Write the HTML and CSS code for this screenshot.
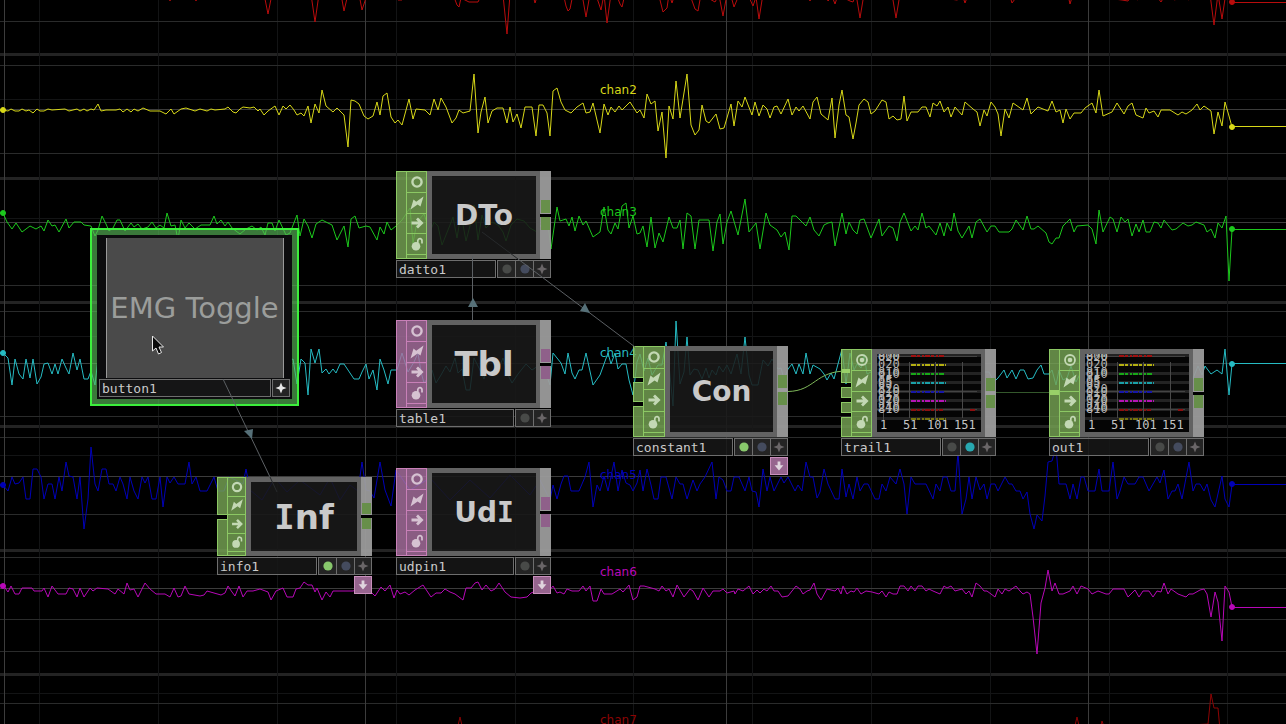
FILE: index.html
```html
<!DOCTYPE html>
<html lang="en">
<head>
<meta charset="utf-8">
<title>EMG network</title>
<link rel="stylesheet" href="styles.css">
</head>
<body>
<svg class="symbols" aria-hidden="true">
  <symbol id="ring" viewBox="-10 -10 20 20"><circle r="4.6" fill="none" stroke="currentColor" stroke-width="2.4"/></symbol>
  <symbol id="target" viewBox="-10 -10 20 20"><circle r="5" fill="none" stroke="currentColor" stroke-width="1.8"/><circle r="2.3" fill="currentColor"/></symbol>
  <symbol id="bolt" viewBox="-10 -10 20 20"><path d="M-6.5 6.500L-3.500-3.500L-.8-1.200L6.500-6.500L3.500 3.500L.6 1.400Z" fill="currentColor"/></symbol>
  <symbol id="arrow" viewBox="-10 -10 20 20"><path d="M-5.5 0H4M0-4.6L4.6 0L0 4.6" fill="none" stroke="currentColor" stroke-width="2.8"/></symbol>
  <symbol id="lock" viewBox="-10 -10 20 20"><circle cx="-1" cy="2.2" r="4.3" fill="currentColor"/><path d="M.8-1V-3.5Q1.2-5.6 3.2-5.4Q5.2-5 5-2.6V-.6" fill="none" stroke="currentColor" stroke-width="1.7"/></symbol>
  <symbol id="star" viewBox="-8 -8 16 16"><path d="M0-5.5L1.6-1.6L5.5 0L1.6 1.6L0 5.5L-1.6 1.6L-5.5 0L-1.6-1.6Z" fill="currentColor"/></symbol>
  <symbol id="dot" viewBox="-8 -8 16 16"><circle r="4.6" fill="currentColor"/></symbol>
  <symbol id="down" viewBox="-8 -8 16 16"><path d="M-1.4-4.5H1.4V-.8H4.4L0 4.4L-4.4-.8H-1.4Z" fill="currentColor"/></symbol>
  <symbol id="plot" viewBox="0 0 104 78">
    <path d="M0 1.5H104M0 10.500H104M0 19.500H104M0 28.500H104M0 37.500H104M0 46.500H104M0 55.500H104M0 64.500H104" stroke="#232323" stroke-width="3"/>
    <path d="M0 2.500H100M0 37.500H100M0 55.500H100" stroke="#444"/>
    <path d="M6.500 8V66M32.500 8V64M58.500 8V66M85.500 8V64" stroke="#484848"/>
    <g fill="none" stroke-width="2" stroke-dasharray="5 1 3 2 2 1">
      <path d="M34 2H68" stroke="#a01010"/><path d="M34 11H69" stroke="#b4b012"/><path d="M34 20H68" stroke="#18a818"/><path d="M34 29H69" stroke="#1aa0a8"/><path d="M34 38H68" stroke="#1818a8"/><path d="M34 47H69" stroke="#b414b4"/><path d="M34 56H66M93 56H98" stroke="#8c1010"/><path d="M34 65H69" stroke="#77750e"/>
    </g>
    <g fill="#b4b4b4">
      <text x="1" y="6">800</text><text x="1" y="7">020</text><text x="1" y="14">020</text><text x="1" y="22">810</text><text x="1" y="24">010</text><text x="1" y="31">05</text><text x="1" y="33">85</text><text x="1" y="39">820</text><text x="1" y="42">010</text><text x="1" y="49">020</text><text x="1" y="51">370</text><text x="1" y="57">240</text><text x="1" y="59">810</text>
    </g>
    <g fill="#c4c4c4"><text x="3" y="75">1</text><text x="26" y="75">51</text><text x="50" y="75">101</text><text x="77" y="75">151</text></g>
  </symbol>
</svg>

<main class="canvas">
  <svg class="layer" role="img" aria-label="EMG channels">
    <g class="grid-band">
      <line x1="0" x2="100%" y1="54.5" y2="54.500"/><line x1="0" x2="100%" y1="178.5" y2="178.500"/><line x1="0" x2="100%" y1="302.5" y2="302.500"/><line x1="0" x2="100%" y1="426.5" y2="426.500"/><line x1="0" x2="100%" y1="550.5" y2="550.500"/><line x1="0" x2="100%" y1="674.5" y2="674.500"/>
    </g>
    <g class="grid-faint">
      <path d="M39.500 0V2000M158.500 0V2000M277.500 0V2000M396.500 0V2000M515.500 0V2000M633.500 0V2000M752.500 0V2000M871.500 0V2000M990.500 0V2000M1227.500 0V2000"/>
      <path d="M0 99.500H4000M0 218.500H4000M0 336.500H4000M0 455.500H4000M0 574.500H4000M0 693.500H4000M1109.500 0V2000"/>
    </g>
    <path class="grid-line" d="M0 21.500H4000M0 65.500H4000M0 153.500H4000M0 285.500H4000M0 311.500H4000M0 416.500H4000M0 437.500H4000M0 514.500H4000M0 557.500H4000M0 619.500H4000M0 651.500H4000M0 703.500H4000"/>
    <path class="grid-main" d="M4.500 0V2000M365.500 0V2000M726.500 0V2000M1088.500 0V2000M0 109.500H4000M0 222.500H4000M0 363.500H4000M0 476.500H4000M0 588.500H4000"/>

    <g class="wave red">
      <polyline points="0,-6 168,-6 170,1 172,-6 194,-6 196,1 198,-6 264,-6 268,14 272,-6 311,-6 315,22 319,-6 341,-6 344,11 348,-6 359,-6 362,10 366,-2 369,-6 396,-3 398,0 402,0 405,-6 454,-3 457,5 459,7 461,-2 469,2 478,2 482,-6 503,-5 507,34 510,-6 533,-5 535,3 538,-6 564,-3 566,6 568,11 570,9 573,-6 582,-6 586,17 590,-6 596,-5 601,10 604,-6 607,23 611,-6 617,-4 620,4 622,7 625,-6 659,-4 663,12 667,8 669,-6 672,3 675,-6 690,-5 695,9 698,11 701,-6 715,2 719,-5 723,16 727,-6 731,-4 734,7 739,-5 749,-3 753,6 756,-3 759,19 763,-6 807,-5 810,1 813,-5 826,-5 828,1 832,-4 835,4 838,-5 850,1 853,2 856,-6 860,18 864,-6 892,-6 896,18 900,-6 907,-5 910,0 914,-6 957,0 963,-3 965,3 968,-5 982,-3 985,0 988,-6 1010,-4 1012,3 1015,-1 1018,-6 1068,-5 1070,4 1073,-6 1122,0 1128,1 1131,-4 1138,0 1143,-5 1158,-2 1161,2 1165,-5 1175,0 1181,-5 1189,0 1194,-6 1210,-6 1214,25 1218,-6 1222,19 1226,-8 1232,2"/>
      <line x1="1232" x2="100%" y1="2.500" y2="2.500"/><circle cx="1232" cy="2" r="2.500"/>
    </g>
    <g class="wave yellow">
      <polyline points="0,110 3,110 8,111 11,109 15,111 19,111 22,109 26,111 29,110 33,113 37,109 40,111 44,111 48,109 52,110 65,109 69,111 73,110 77,109 80,111 84,109 87,111 91,109 94,110 98,104 101,111 106,110 116,110 120,109 123,112 127,109 131,112 134,109 138,111 143,108 150,111 160,111 166,114 171,109 174,114 181,109 186,108 195,111 200,109 207,111 211,109 215,110 225,109 228,107 233,112 236,113 240,109 243,107 250,108 254,107 258,111 260,109 264,115 268,111 275,106 279,115 283,106 286,109 290,105 294,110 297,115 301,113 304,116 308,106 311,123 315,104 319,113 322,90 326,106 333,112 337,108 344,115 348,147 351,100 355,101 359,104 364,116 368,119 373,116 377,102 380,115 383,96 387,93 391,117 395,123 398,120 402,125 409,99 413,119 416,109 425,110 430,115 434,99 438,110 441,98 446,107 452,123 456,118 459,110 463,113 470,111 474,74 478,133 481,112 485,97 488,123 492,111 497,108 503,108 507,123 510,107 513,122 517,114 521,128 525,107 532,107 536,136 539,105 543,105 547,113 550,136 553,91 557,88 561,102 565,110 571,113 577,107 583,103 586,113 590,112 593,103 600,133 604,104 608,115 611,107 615,112 619,106 622,110 630,102 637,113 640,110 644,118 647,94 651,104 655,101 658,131 662,112 666,158 669,106 673,119 676,81 680,118 687,74 691,125 695,135 699,130 702,105 706,121 709,123 716,114 720,129 724,128 731,104 734,126 738,101 742,107 745,97 752,115 755,102 759,116 763,105 767,109 770,118 774,107 777,106 781,114 788,99 792,115 796,107 799,111 803,106 810,119 813,102 817,97 821,114 828,120 832,98 835,138 839,105 842,90 846,115 849,117 853,139 856,123 859,105 864,99 868,102 871,114 875,111 882,100 886,102 889,119 893,116 897,120 901,119 904,96 907,121 911,112 918,112 922,107 926,107 930,117 933,103 937,106 940,101 944,112 948,107 951,117 955,107 962,115 965,102 973,109 977,112 980,126 984,110 987,116 991,102 995,107 998,114 1001,136 1005,109 1009,118 1013,103 1023,110 1027,98 1031,114 1038,107 1048,111 1052,101 1056,112 1060,110 1063,123 1066,109 1070,119 1074,113 1081,113 1085,108 1092,103 1096,113 1099,90 1103,116 1112,112 1117,103 1124,114 1128,106 1132,103 1136,115 1143,118 1146,108 1149,113 1154,111 1158,117 1161,110 1170,110 1178,115 1182,112 1186,114 1192,110 1197,104 1200,110 1204,106 1211,111 1214,134 1218,112 1222,126 1225,102 1229,116 1232,127"/>
      <line x1="1232" x2="100%" y1="126.500" y2="126.500"/><circle cx="3" cy="110" r="2.500"/><circle cx="1232" cy="127" r="2.500"/>
    </g>
    <g class="wave green">
      <polyline points="0,213 3,213 7,222 12,229 16,223 22,232 30,226 36,229 41,226 44,231 48,220 52,226 55,225 59,232 66,219 69,228 74,222 81,222 84,225 91,226 95,236 98,230 102,216 106,224 109,231 113,228 117,220 120,220 125,231 131,223 134,227 138,224 142,229 148,227 152,222 156,228 160,225 164,228 167,213 171,226 175,225 178,240 181,220 185,228 189,223 195,229 201,225 210,225 214,216 217,224 221,220 225,226 228,222 232,228 240,234 246,229 252,226 257,230 261,227 265,235 268,223 272,223 275,231 279,220 286,235 290,233 297,215 300,236 304,219 308,226 312,238 316,224 322,220 332,225 337,240 344,226 348,247 351,219 355,216 359,228 366,226 370,227 377,240 380,227 384,234 387,222 391,230 396,226 402,220 410,208 413,243 417,222 424,214 430,232 434,222 438,226 442,245 450,225 453,217 457,238 461,214 466,241 471,222 474,205 478,240 482,215 486,228 492,222 498,225 503,232 506,241 511,225 517,219 524,221 530,228 537,232 541,225 545,228 547,216 551,249 557,207 560,221 566,219 569,226 572,217 575,231 579,216 583,225 586,221 593,237 600,232 604,207 608,230 611,234 615,223 618,229 622,206 626,203 629,228 633,216 637,234 640,233 643,226 647,247 651,217 655,248 659,233 663,242 669,217 673,228 677,228 680,220 683,249 687,213 691,216 695,249 699,220 709,220 713,251 717,222 720,214 723,244 727,222 731,211 738,235 745,199 749,232 756,223 760,249 766,213 770,225 777,230 781,237 785,232 789,250 792,216 796,216 806,226 810,217 814,230 819,236 824,225 828,223 832,222 835,246 842,213 846,234 849,222 853,230 857,234 860,220 864,219 871,238 879,219 882,236 889,226 893,228 897,241 900,222 904,213 911,231 915,226 918,230 922,213 926,228 929,226 936,235 940,223 944,236 947,223 951,231 954,213 958,231 962,238 969,226 972,238 976,222 980,219 987,232 991,226 995,226 999,232 1009,232 1012,229 1016,220 1023,230 1027,216 1031,229 1034,229 1038,226 1046,233 1049,242 1052,244 1056,238 1059,238 1063,226 1070,219 1074,232 1077,226 1088,225 1092,229 1096,244 1099,210 1103,232 1110,217 1113,219 1117,232 1121,217 1125,222 1128,219 1132,236 1136,224 1139,232 1143,220 1146,232 1150,232 1154,222 1158,223 1161,228 1164,220 1172,230 1176,229 1183,223 1188,226 1192,225 1196,222 1204,225 1207,232 1211,229 1215,238 1218,223 1222,228 1226,216 1229,281 1232,230"/>
      <line x1="1232" x2="100%" y1="229.500" y2="229.500"/><circle cx="3" cy="213" r="2.500"/><circle cx="1232" cy="229" r="2.500"/>
    </g>
    <g class="wave cyan">
      <polyline points="0,353 3,353 8,358 12,385 15,359 19,374 23,379 26,359 30,378 33,359 37,384 41,377 44,364 48,363 52,374 55,364 58,374 62,359 66,368 69,374 73,353 77,370 80,359 84,379 88,379 91,371 95,385 98,358 105,360 120,379 125,370 133,378 137,385 140,374 164,379 173,370 184,376 188,386 191,374 243,379 255,370 271,379 280,365 293,359 297,384 301,359 305,363 308,395 311,349 315,363 319,349 322,373 326,369 329,374 333,369 336,373 340,364 344,364 354,379 359,379 362,372 366,364 369,379 373,370 377,390 380,359 384,370 388,384 391,370 397,370 402,353 408,372 414,362 418,353 421,372 424,383 428,378 432,370 436,383 441,375 446,366 450,372 455,358 458,373 462,369 466,390 470,390 474,358 479,368 484,379 488,362 494,358 498,370 503,358 508,375 512,383 518,374 526,364 532,370 541,364 546,374 550,385 553,353 561,363 565,374 568,353 572,373 575,379 579,370 582,370 586,353 593,385 600,375 604,364 608,353 611,364 615,353 618,369 622,364 626,364 629,380 633,395 637,362 640,354 644,371 648,358 652,375 658,365 662,365 666,342 669,365 673,406 676,321 680,384 684,372 687,337 690,375 694,369 698,370 702,379 706,368 709,378 712,370 716,375 719,366 723,372 727,365 731,374 737,354 741,374 745,337 749,375 752,385 758,385 763,360 768,366 772,359 778,369 781,368 784,379 788,369 792,364 796,374 799,364 803,374 806,353 810,374 813,365 820,369 824,374 827,380 831,373 834,379 838,364 842,349 846,384 850,353 854,370 857,364 861,368 864,354 867,374 875,370 880,365 975,365 981,368 985,372 989,372 994,382 998,378 1004,370 1007,378 1012,370 1016,379 1020,370 1024,370 1028,379 1033,378 1037,370 1041,365 1044,374 1049,374 1052,370 1056,385 1059,370 1063,380 1067,378 1071,366 1076,382 1080,374 1189,357 1192,381 1198,366 1202,375 1205,366 1211,374 1217,370 1222,374 1225,349 1229,395 1232,364"/>
      <line x1="1232" x2="100%" y1="363.500" y2="363.500"/><circle cx="3" cy="353" r="2.500"/><circle cx="1232" cy="364" r="2.500"/>
    </g>
    <g class="wave blue">
      <polyline points="0,485 3,485 8,491 12,477 15,484 19,483 23,477 26,499 30,499 33,469 37,469 41,477 44,499 48,484 52,484 55,499 59,477 62,491 66,462 69,476 73,477 77,499 80,477 84,529 88,499 91,447 95,484 98,491 102,469 106,469 109,484 113,484 116,491 120,477 123,484 127,499 130,477 134,491 138,499 142,477 145,483 148,477 152,499 156,499 160,477 163,507 167,477 170,483 174,477 178,484 185,484 189,462 192,484 196,477 200,491 207,491 214,477 218,491 224,491 229,477 240,482 243,484 246,469 250,490 262,500 275,478 287,492 300,480 320,495 330,478 340,500 350,485 358,491 362,462 366,490 370,491 374,498 380,462 385,490 391,506 396,470 410,490 430,478 450,500 470,480 490,498 510,475 530,495 540,480 550,500 553,485 557,499 561,484 564,476 568,476 571,491 579,491 585,477 589,462 593,507 597,485 600,491 604,476 608,491 614,462 618,491 622,470 626,483 630,485 633,491 637,483 640,470 643,491 647,469 651,485 654,499 658,499 661,477 666,477 672,499 676,477 680,484 683,484 687,499 693,480 697,491 700,484 705,477 712,462 716,499 719,477 723,480 727,491 731,491 734,477 739,477 745,491 749,477 752,491 756,492 759,507 763,469 767,491 770,477 774,491 781,477 784,483 788,477 795,491 798,485 802,491 806,462 810,477 813,477 817,498 820,492 824,469 828,484 835,499 839,499 842,469 846,497 849,484 853,499 857,477 860,491 864,484 868,484 875,499 879,499 882,484 886,491 890,477 896,484 900,469 904,484 907,514 911,477 915,484 926,484 933,499 936,484 940,491 943,477 947,477 951,491 955,491 958,452 962,514 966,499 969,477 972,499 976,477 980,490 984,484 987,499 991,484 995,484 998,491 1005,477 1009,484 1012,484 1016,491 1020,491 1023,499 1027,492 1030,514 1034,529 1037,515 1042,521 1045,496 1048,462 1052,461 1056,447 1059,484 1066,484 1070,499 1073,484 1077,499 1081,477 1084,477 1088,491 1095,491 1099,469 1102,491 1109,491 1113,462 1117,499 1120,491 1124,477 1128,484 1135,484 1139,477 1143,477 1149,491 1157,477 1160,483 1164,470 1168,499 1172,491 1175,491 1178,484 1182,499 1189,462 1193,491 1196,484 1200,484 1204,491 1207,484 1211,500 1215,507 1222,476 1225,499 1229,507 1232,485"/>
      <line x1="1232" x2="100%" y1="484.500" y2="484.500"/><circle cx="3" cy="485" r="2.500"/><circle cx="1232" cy="484" r="2.500"/>
    </g>
    <g class="wave magenta">
      <polyline points="0,585 3,585 8,592 11,586 15,594 19,594 22,588 32,588 34,591 42,591 44,588 48,597 52,586 58,594 66,594 69,588 73,589 77,597 80,588 84,597 90,588 93,591 97,588 108,589 115,594 118,589 124,594 127,583 130,590 134,589 138,597 145,583 150,589 156,594 165,594 170,597 174,588 178,597 181,596 185,586 189,594 200,596 204,595 207,591 214,593 221,595 225,593 228,586 232,592 235,596 239,586 243,597 247,591 253,591 260,589 268,592 271,600 276,591 283,588 287,597 293,597 296,589 300,588 304,582 308,585 312,585 315,592 317,588 322,600 326,592 330,597 333,591 353,591 362,588 371,592 375,596 381,587 385,591 390,585 394,598 397,590 400,594 405,592 409,595 415,590 423,585 431,597 436,593 441,593 445,589 450,592 455,594 463,600 466,588 471,588 475,583 478,582 482,590 486,585 491,591 495,589 499,583 505,592 511,597 520,598 527,597 531,593 536,591 541,592 545,590 549,591 553,586 557,593 560,592 564,594 567,589 572,591 579,591 583,586 586,591 590,586 593,601 597,601 601,589 604,594 612,594 620,589 623,592 629,585 633,600 637,597 640,586 644,586 655,589 659,591 662,586 666,591 669,589 673,597 677,585 684,597 690,589 693,591 698,600 703,588 709,597 713,591 720,591 723,589 727,593 734,591 735,594 738,589 743,591 749,586 753,594 757,590 760,593 764,589 767,591 771,586 774,591 778,591 782,597 788,596 796,586 800,589 803,594 807,591 810,590 814,583 817,594 821,600 827,589 835,591 838,588 841,594 843,586 847,594 851,591 854,592 857,588 861,594 866,591 872,592 879,594 882,591 886,597 889,592 893,594 897,594 900,586 904,586 908,591 911,586 915,591 918,586 922,586 926,591 929,589 933,591 940,594 944,586 947,588 951,586 955,591 962,589 966,594 969,591 972,597 976,583 980,586 984,591 987,591 995,597 998,589 1002,594 1005,589 1009,591 1016,586 1020,591 1023,594 1027,592 1030,594 1033,617 1037,654 1041,603 1045,588 1048,570 1052,591 1055,583 1059,594 1063,594 1070,591 1073,586 1077,594 1081,586 1088,589 1092,594 1098,591 1106,594 1109,594 1113,589 1124,589 1128,597 1135,590 1139,597 1143,591 1149,591 1153,597 1157,591 1161,592 1164,583 1168,594 1171,589 1178,594 1186,597 1189,594 1193,594 1200,590 1204,589 1207,594 1211,617 1215,592 1218,602 1222,641 1225,586 1229,592 1232,607"/>
      <line x1="1232" x2="100%" y1="607.500" y2="607.500"/><circle cx="3" cy="586" r="2.500"/><circle cx="1232" cy="607" r="2.500"/>
    </g>
    <g class="wave maroon">
      <polyline points="0,730 457,730 460,717 463,730 1074,730 1077,717 1080,730 1100,730 1102,721 1105,730 1208,724 1211,694 1214,708 1218,708 1220,730"/>
    </g>
    <g class="labels">
      <text class="yellow" x="600" y="94">chan2</text>
      <text class="green" x="600" y="216">chan3</text>
      <text class="cyan" x="600" y="357">chan4</text>
      <text class="blue" x="600" y="479">chan5</text>
      <text class="magenta" x="600" y="576">chan6</text>
      <text class="maroon" x="600" y="724">chan7</text>
    </g>
  </svg>

  <section class="selection at-button">
    <div class="panel">
      <button class="toggle" type="button">EMG Toggle</button>
      <div class="bar"><span class="name">button1</span><div class="flags"><button class="lit" type="button" aria-label="Viewer active"><svg><use href="#star"/></svg></button></div></div>
    </div>
  </section>

  <section class="node chop at-datto">
    <div class="body">
      <div class="inputs"><i></i></div>
      <div class="tools"><button type="button" aria-label="Viewer"><svg><use href="#ring"/></svg></button><button type="button" aria-label="Clone"><svg><use href="#bolt"/></svg></button><button type="button" aria-label="Bypass"><svg><use href="#arrow"/></svg></button><button type="button" aria-label="Lock"><svg><use href="#lock"/></svg></button></div>
      <div class="view"><span class="big">DTo</span></div>
      <div class="outputs"><i></i><b></b><i></i></div>
    </div>
    <div class="bar"><span class="name">datto1</span><div class="flags"><button type="button" aria-label="Display"><svg><use href="#dot"/></svg></button><button class="blueish" type="button" aria-label="Export"><svg><use href="#dot"/></svg></button><button class="spark" type="button" aria-label="Viewer active"><svg><use href="#star"/></svg></button></div></div>
  </section>

  <section class="node dat at-table">
    <div class="body">
      <div class="inputs"><i></i></div>
      <div class="tools"><button type="button" aria-label="Viewer"><svg><use href="#ring"/></svg></button><button type="button" aria-label="Clone"><svg><use href="#bolt"/></svg></button><button type="button" aria-label="Bypass"><svg><use href="#arrow"/></svg></button><button type="button" aria-label="Lock"><svg><use href="#lock"/></svg></button></div>
      <div class="view"><span class="huge">Tbl</span></div>
      <div class="outputs"><i></i><b></b><i></i></div>
    </div>
    <div class="bar"><span class="name">table1</span><div class="flags"><button type="button" aria-label="Display"><svg><use href="#dot"/></svg></button><button class="spark" type="button" aria-label="Viewer active"><svg><use href="#star"/></svg></button></div></div>
  </section>

  <section class="node dat at-udpin">
    <div class="body">
      <div class="inputs"><i></i></div>
      <div class="tools"><button type="button" aria-label="Viewer"><svg><use href="#ring"/></svg></button><button type="button" aria-label="Clone"><svg><use href="#bolt"/></svg></button><button type="button" aria-label="Bypass"><svg><use href="#arrow"/></svg></button><button type="button" aria-label="Lock"><svg><use href="#lock"/></svg></button></div>
      <div class="view"><span class="big">Ud<span class="slab">I</span></span></div>
      <div class="outputs"><i></i><b></b><i></i></div>
    </div>
    <div class="bar"><span class="name">udpin1</span><div class="flags"><button type="button" aria-label="Display"><svg><use href="#dot"/></svg></button><button class="spark" type="button" aria-label="Viewer active"><svg><use href="#star"/></svg></button></div></div>
    <button class="dock" type="button" aria-label="Open docked"><svg><use href="#down"/></svg></button>
  </section>

  <section class="node chop small at-info">
    <div class="body">
      <div class="inputs"><i></i><i></i></div>
      <div class="tools"><button type="button" aria-label="Viewer"><svg><use href="#ring"/></svg></button><button type="button" aria-label="Clone"><svg><use href="#bolt"/></svg></button><button type="button" aria-label="Bypass"><svg><use href="#arrow"/></svg></button><button type="button" aria-label="Lock"><svg><use href="#lock"/></svg></button></div>
      <div class="view"><span class="huge"><span class="slab">I</span>nf</span></div>
      <div class="outputs"><i></i><b></b><i></i></div>
    </div>
    <div class="bar"><span class="name">info1</span><div class="flags"><button class="on" type="button" aria-label="Display"><svg><use href="#dot"/></svg></button><button class="blueish" type="button" aria-label="Export"><svg><use href="#dot"/></svg></button><button class="spark" type="button" aria-label="Viewer active"><svg><use href="#star"/></svg></button></div></div>
    <button class="dock" type="button" aria-label="Open docked"><svg><use href="#down"/></svg></button>
  </section>

  <section class="node chop tall joined at-constant">
    <div class="body">
      <div class="inputs"><i></i><i></i><i></i></div>
      <div class="tools"><button type="button" aria-label="Viewer"><svg><use href="#ring"/></svg></button><button type="button" aria-label="Clone"><svg><use href="#bolt"/></svg></button><button type="button" aria-label="Bypass"><svg><use href="#arrow"/></svg></button><button type="button" aria-label="Lock"><svg><use href="#lock"/></svg></button></div>
      <div class="view"><span class="big">Con</span></div>
      <div class="outputs"><i></i><b></b><i></i></div>
    </div>
    <div class="bar"><span class="name">constant1</span><div class="flags"><button class="on" type="button" aria-label="Display"><svg><use href="#dot"/></svg></button><button class="blueish" type="button" aria-label="Export"><svg><use href="#dot"/></svg></button><button class="spark" type="button" aria-label="Viewer active"><svg><use href="#star"/></svg></button></div></div>
    <button class="dock" type="button" aria-label="Open docked"><svg><use href="#down"/></svg></button>
  </section>

  <section class="node chop joined multi at-trail">
    <div class="body">
      <div class="inputs"><i></i><i></i><i></i><i></i></div>
      <div class="tools"><button type="button" aria-label="Viewer"><svg><use href="#target"/></svg></button><button type="button" aria-label="Clone"><svg><use href="#bolt"/></svg></button><button type="button" aria-label="Bypass"><svg><use href="#arrow"/></svg></button><button type="button" aria-label="Lock"><svg><use href="#lock"/></svg></button></div>
      <div class="view"><svg class="plot"><use href="#plot"/></svg></div>
      <div class="outputs"><i></i><b></b><i></i></div>
    </div>
    <div class="bar"><span class="name">trail1</span><div class="flags"><button type="button" aria-label="Display"><svg><use href="#dot"/></svg></button><button class="aqua" type="button" aria-label="Export"><svg><use href="#dot"/></svg></button><button class="spark" type="button" aria-label="Viewer active"><svg><use href="#star"/></svg></button></div></div>
  </section>

  <section class="node chop at-out">
    <div class="body">
      <div class="inputs"><i></i></div>
      <div class="tools"><button type="button" aria-label="Viewer"><svg><use href="#target"/></svg></button><button type="button" aria-label="Clone"><svg><use href="#bolt"/></svg></button><button type="button" aria-label="Bypass"><svg><use href="#arrow"/></svg></button><button type="button" aria-label="Lock"><svg><use href="#lock"/></svg></button></div>
      <div class="view"><svg class="plot"><use href="#plot"/></svg></div>
      <div class="outputs"><i></i><b></b><i></i></div>
    </div>
    <div class="bar"><span class="name">out1</span><div class="flags"><button type="button" aria-label="Display"><svg><use href="#dot"/></svg></button><button class="blueish" type="button" aria-label="Export"><svg><use href="#dot"/></svg></button><button class="spark" type="button" aria-label="Viewer active"><svg><use href="#star"/></svg></button></div></div>
  </section>

  <svg class="layer" aria-hidden="true">
    <path class="link" d="M223 379L270 477M472.500 256V322M518 259L635 347"/>
    <path class="link dim" d="M270 477L277 492M482 232L518 259"/>
    <path class="link-head" d="M244 431L253 429L252 439ZM468 307H478L473 298ZM580 311L585 303L590 313Z"/>
    <path class="wire" d="M788 391.500C815 391 815 371 847 371"/>
    <path class="wire dark" d="M996 392.500H1049"/>
    <path class="plug" d="M842 369H850V373H842ZM1050 390H1059V395H1050Z"/>
    <path class="cursor" d="M152.500 336V351L156 348L158.500 354L161.500 352.500L159 347H163.500Z"/>
  </svg>
</main>
</body>
</html>
```
FILE: styles.css
```css
* { box-sizing: border-box; }
body { margin: 0; background: #000; font-family: "DejaVu Sans", sans-serif; }
button { margin: 0; padding: 0; border: 0; background: none; color: inherit; font: inherit; display: flex; align-items: center; justify-content: center; }
.symbols { position: absolute; width: 0; height: 0; }
.canvas { position: relative; min-height: 100vh; overflow: hidden; background: #000; }
.layer { position: absolute; inset: 0; width: 100%; height: 100%; pointer-events: none; }

.grid-band { stroke: #232323; stroke-width: 3; }
.grid-faint { stroke: #131415; fill: none; }
.grid-line { stroke: #2a2b2b; fill: none; }
.grid-main { stroke: #3c3c3c; fill: none; }

.wave { stroke: currentColor; stroke-width: 1; fill: currentColor; }
.wave polyline { fill: none; }
.red { color: #b80c0c; }
.yellow { color: #d8d818; }
.green { color: #1cc81c; }
.cyan { color: #26bcc4; }
.blue { color: #0000b8; }
.magenta { color: #b808b8; }
.maroon { color: #8c0404; }
.labels text { fill: currentColor; font-size: 12px; }

.node { position: absolute; width: 155px; --fill: rgba(118, 164, 84, 0.82); --edge: #8cc864; --glyph: #c3d8b4; }
.dat { --fill: rgba(168, 112, 160, 0.82); --edge: #c880b8; --glyph: #d6c2d2; }
.at-datto { left: 396px; top: 171px; }
.at-table { left: 396px; top: 320px; }
.at-udpin { left: 396px; top: 468px; }
.at-info { left: 217px; top: 477px; }
.at-constant { left: 633px; top: 346px; }
.at-trail { left: 841px; top: 349px; }
.at-out { left: 1049px; top: 349px; }

.body { display: flex; height: 88px; }
.small .body { height: 79px; }
.tall .body { height: 91px; }
.inputs { width: 10px; display: flex; flex-direction: column; gap: 4px; }
.inputs i { flex: 1; background: var(--fill); border: 1px solid var(--edge); border-right: 0; }
.tall .inputs i:first-child { flex: 0 0 32px; }
.tall .inputs i:nth-child(2) { flex: 0 0 20px; }
.multi .inputs i:first-child { flex: 0 0 34px; }
.multi .inputs i:nth-child(2), .multi .inputs i:nth-child(3) { flex: 0 0 11px; }
.tools { width: 21px; display: flex; flex-direction: column; background: var(--fill); border: 1px solid var(--edge); padding-bottom: 3px; color: var(--glyph); }
.tools button { flex: 1; min-height: 0; border-bottom: 1px solid var(--edge); }
.tools svg { width: 20px; height: 20px; flex: none; }
.small .tools { width: 19px; }
.small .tools svg { width: 18px; height: 18px; }
.tall .tools { width: 22px; }
.view { flex: 1; min-width: 0; display: flex; align-items: center; justify-content: center; background: rgba(25, 25, 25, 0.87); background-clip: padding-box; border: 5px solid #626262; border-right-width: 4px; color: #c9c9c9; font-weight: bold; overflow: hidden; }
.big { font-size: 28px; }
.huge { font-size: 34px; }
.slab { font-family: "DejaVu Sans Mono", monospace; }
.plot { width: 104px; height: 78px; flex: none; background: #050505; font: 12px "DejaVu Sans Mono", monospace; }
.outputs { width: 11px; display: flex; flex-direction: column; align-items: center; background: rgba(156, 156, 156, 0.94); padding-top: 29px; }
.outputs i { width: 9px; height: 13px; background: #678f4a; }
.dat .outputs i { background: #8f608a; }
.outputs b { width: 11px; height: 4px; background: #000; border-top: 1px solid #9a9a9a; }
.small .outputs { padding-top: 26px; }
.small .outputs i { height: 11px; }
.joined .outputs b { background: #9c9c9c; }

.bar { display: flex; gap: 1px; height: 18px; margin-top: 1px; }
.name { flex: 1; padding-left: 2px; border: 1px solid #6e6e6e; background: rgba(24, 24, 24, 0.85); color: #cacaca; font: 13px/18px "DejaVu Sans Mono", monospace; }
.flags { display: flex; border: 1px solid #6e6e6e; background: #242424; color: #484a48; }
.flags button { width: 18px; }
.flags button:first-child, .flags button:last-child { width: 17px; }
.flags button:only-child { width: 16px; }
.flags button + button { border-left: 1px solid #6e6e6e; }
.flags svg { width: 16px; height: 16px; flex: none; }
.flags .blueish { color: #444b5e; }
.flags .spark { color: #6a6668; }
.flags .on { color: #88c86c; }
.flags .aqua { color: #28a8b0; }
.flags .lit { color: #e8e8e8; }
.dock { position: absolute; right: 0; top: 100%; width: 18px; height: 18px; margin-top: 1px; border: 1px solid #c98fbc; background: #96648e; color: #e0d4de; }
.dock svg { width: 16px; height: 16px; flex: none; }

.selection { position: absolute; width: 209px; padding: 5px; border: 2px solid #3cf03c; background: rgba(90, 190, 90, 0.64); }
.at-button { left: 90px; top: 228px; }
.panel { padding: 3px 2px 2px; background: #0c0c0e; }
.toggle { width: 178px; height: 140px; margin: 0 auto; background: #4a4a4a; border: solid #9a9a9a; border-width: 0 1px; color: #9b9d9b; font-size: 29px; white-space: nowrap; }

.link { stroke: #5c6064; fill: none; }
.dim { stroke: #272a2c; }
.link-head { fill: #567078; }
.wire { stroke: #7fb85a; fill: none; }
.dark { stroke: #34582c; }
.plug { fill: #98d068; }
.cursor { fill: #0a0a0a; stroke: #e8e8e8; }
```
